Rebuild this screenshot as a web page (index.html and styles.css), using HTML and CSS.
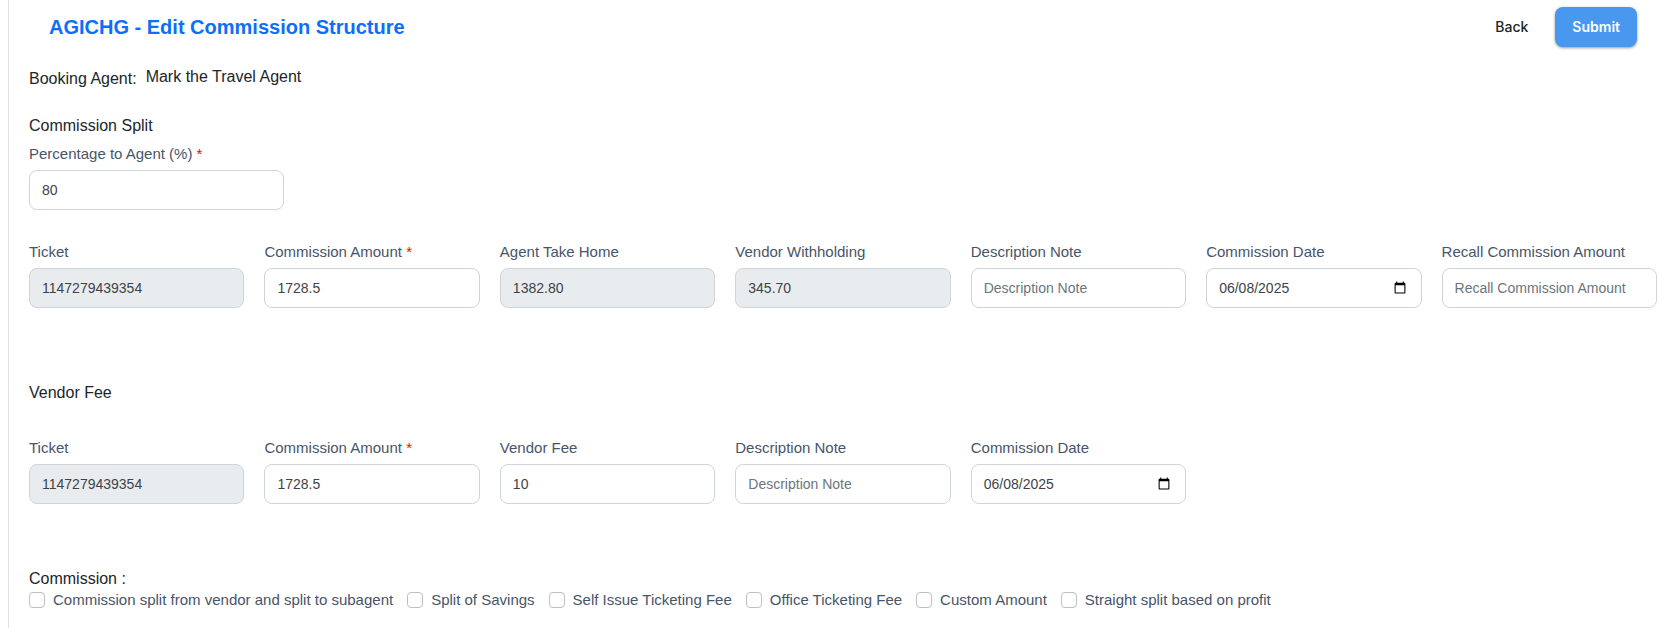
FILE: index.html
```html
<!DOCTYPE html>
<html lang="en">
<head>
    <meta charset="UTF-8">
    <meta name="viewport" content="width=device-width, initial-scale=1.0">
    <title>Edit Commission Structure</title>
    <link rel="stylesheet" href="styles.css">
</head>
<body>

<form class="page">
    <header class="page-header">
        <h1>AGICHG - Edit Commission Structure</h1>
        <div class="actions">
            <button type="button" class="btn btn-back">Back</button>
            <button type="submit" class="btn btn-submit">Submit</button>
        </div>
    </header>

    <div class="booking-agent">
        <span>Booking Agent:</span>
        <span class="agent-name">Mark the Travel Agent</span>
    </div>

    <section class="split">
        <h2>Commission Split</h2>
        <div class="form-group percentage">
            <label for="percentage">Percentage to Agent (%) <span class="required">*</span></label>
            <input type="text" id="percentage" value="80" required>
        </div>
        <div class="form-row">
            <div class="form-group">
                <label for="splitTicket">Ticket</label>
                <input type="text" id="splitTicket" value="1147279439354" disabled>
            </div>
            <div class="form-group">
                <label for="splitAmount">Commission Amount <span class="required">*</span></label>
                <input type="text" id="splitAmount" value="1728.5" required>
            </div>
            <div class="form-group">
                <label for="takeHome">Agent Take Home</label>
                <input type="text" id="takeHome" value="1382.80" disabled>
            </div>
            <div class="form-group">
                <label for="withholding">Vendor Withholding</label>
                <input type="text" id="withholding" value="345.70" disabled>
            </div>
            <div class="form-group">
                <label for="splitNote">Description Note</label>
                <input type="text" id="splitNote" placeholder="Description Note">
            </div>
            <div class="form-group">
                <label for="splitDate">Commission Date</label>
                <input type="date" id="splitDate" value="2025-06-08">
            </div>
            <div class="form-group">
                <label for="recallAmount">Recall Commission Amount</label>
                <input type="text" id="recallAmount" placeholder="Recall Commission Amount">
            </div>
        </div>
    </section>

    <section class="vendor">
        <h2>Vendor Fee</h2>
        <div class="form-row">
            <div class="form-group">
                <label for="vendorTicket">Ticket</label>
                <input type="text" id="vendorTicket" value="1147279439354" disabled>
            </div>
            <div class="form-group">
                <label for="vendorAmount">Commission Amount <span class="required">*</span></label>
                <input type="text" id="vendorAmount" value="1728.5" required>
            </div>
            <div class="form-group">
                <label for="vendorFee">Vendor Fee</label>
                <input type="text" id="vendorFee" value="10">
            </div>
            <div class="form-group">
                <label for="vendorNote">Description Note</label>
                <input type="text" id="vendorNote" placeholder="Description Note">
            </div>
            <div class="form-group">
                <label for="vendorDate">Commission Date</label>
                <input type="date" id="vendorDate" value="2025-06-08">
            </div>
        </div>
    </section>

    <section class="commission">
        <h2>Commission :</h2>
        <div class="checks">
            <label class="check"><input type="checkbox" name="vendorSplit">Commission split from vendor and split to subagent</label>
            <label class="check"><input type="checkbox" name="savings">Split of Savings</label>
            <label class="check"><input type="checkbox" name="selfIssue">Self Issue Ticketing Fee</label>
            <label class="check"><input type="checkbox" name="officeFee">Office Ticketing Fee</label>
            <label class="check"><input type="checkbox" name="custom">Custom Amount</label>
            <label class="check"><input type="checkbox" name="straight">Straight split based on profit</label>
        </div>
    </section>
</form>

</body>
</html>
```
FILE: styles.css
```css
* {
    box-sizing: border-box;
}
body {
    margin: 0;
    font-family: "Liberation Sans", Arial, sans-serif;
    font-size: 16px;
    line-height: 24px;
    color: #212529;
    background-color: #fff;
}
.page {
    min-height: 100vh;
    margin-left: 8px;
    padding: 0 5px 8px 20px;
    border-left: 1px solid #dee2e6;
}
.page-header {
    display: flex;
    justify-content: space-between;
    align-items: center;
    padding: 7px 20px;
}
h1 {
    margin: 0;
    font-size: 20px;
    font-weight: bold;
    color: #0d6efd;
}
h2 {
    margin: 0;
    font-size: 16px;
    font-weight: normal;
}
.actions {
    display: flex;
    gap: 10px;
}
.btn {
    height: 40px;
    padding: 0 17px 2px;
    border: none;
    border-radius: 8px;
    background-color: transparent;
    font-family: Inter, sans-serif;
    font-size: 14px;
    font-weight: 500;
    color: #212529;
    cursor: pointer;
}
.btn-submit {
    background-color: #4898f0;
    font-weight: 600;
    color: #fff;
    box-shadow: 0 1px 3px rgba(0, 0, 0, 0.4);
}
.booking-agent {
    display: flex;
    align-items: flex-start;
    gap: 9px;
    padding-top: 11px;
}
.booking-agent span {
    padding-top: 2px;
}
.booking-agent .agent-name {
    padding-top: 0;
}
.split {
    margin-top: 23px;
}
.percentage {
    width: 255px;
    margin: 5px 0 31px;
}
.form-row {
    display: grid;
    grid-template-columns: repeat(7, 1fr);
    gap: 20px;
}
.form-group label {
    display: block;
    margin-bottom: 5px;
    font-size: 15px;
    line-height: 22px;
    color: #475569;
    white-space: nowrap;
}
.required {
    color: red;
}
.form-group input {
    display: block;
    width: 100%;
    height: 40px;
    padding: 0 12px;
    border: 1px solid #ced4da;
    border-radius: 8px;
    background-color: #fff;
    font-family: inherit;
    font-size: 14px;
    color: #3f4347;
}
.form-group input:disabled {
    background-color: #e9ecef;
}
.form-group input::placeholder {
    color: #6c757d;
}
/* keep the date digits flush with the text inputs */
.form-group input::-webkit-datetime-edit-month-field,
.form-group input::-webkit-datetime-edit-day-field,
.form-group input::-webkit-datetime-edit-year-field {
    padding: 0;
}
.vendor {
    margin-top: 73px;
}
.vendor h2 {
    margin-bottom: 32px;
}
.commission {
    margin-top: 63px;
}
.checks {
    display: flex;
    flex-wrap: wrap;
    column-gap: 14px;
}
.check {
    display: flex;
    align-items: center;
    gap: 8px;
    font-size: 15px;
    line-height: 18px;
    color: #475569;
}
.check input {
    appearance: none;
    width: 16px;
    height: 16px;
    margin: 0;
    border: 1px solid #bfbfbf;
    border-radius: 4px;
    background-color: #fff;
}
.check input:checked {
    border-color: #0d6efd;
    background-color: #0d6efd;
}
```
